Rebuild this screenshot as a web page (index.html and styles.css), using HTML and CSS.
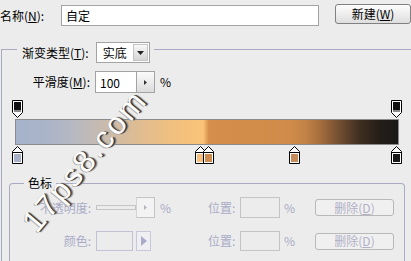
FILE: index.html
```html
<!DOCTYPE html>
<html lang="zh-CN">
<head>
    <meta charset="UTF-8">
    <meta name="viewport" content="width=device-width, initial-scale=1.0">
    <title>渐变编辑器</title>
    <link rel="stylesheet" href="styles.css">
</head>
<body>
    <svg class="defs" width="0" height="0">
        <symbol id="opacity-stop" viewBox="0 0 11 18">
            <path d="M0.5 0.5 H10.5 V12.5 L5.5 17.5 L0.5 12.5 Z" fill="#fff" stroke="#000"/>
            <rect x="2" y="2" width="7" height="8" fill="#111"/>
            <rect x="2" y="10" width="7" height="2" fill="#8a8a8a"/>
        </symbol>
        <symbol id="color-stop" viewBox="0 0 11 18">
            <path d="M5.5 0.5 L10.5 5.5 V17.5 H0.5 V5.5 Z" fill="#fff" stroke="#000"/>
            <path d="M1 6.5 H10" stroke="#000"/>
            <rect x="2" y="8" width="7" height="8" fill="currentColor"/>
        </symbol>
    </svg>

    <div class="dialog">
        <div class="name-row">
            <span class="name-label">名称(<u>N</u>):</span>
            <div class="field name-field">自定</div>
            <button class="btn btn-new">新建(<u>W</u>)</button>
        </div>

        <div class="gradient-group">
            <div class="group-head">
                <span>渐变类型(<u>T</u>):</span>
                <div class="select">
                    <span class="select-value">实底</span>
                    <span class="select-arrow">
                        <svg width="7" height="4" viewBox="0 0 7 4"><path d="M0 0 H7 L3.5 4 Z" fill="#222"/></svg>
                    </span>
                </div>
            </div>

            <div class="smooth-row">
                <span class="row-label">平滑度(<u>M</u>):</span>
                <div class="field num-field">100</div>
                <span class="stepper">
                    <svg width="3" height="5" viewBox="0 0 3 5"><path d="M0 0 L3 2.5 L0 5 Z" fill="#333"/></svg>
                </span>
                <span class="unit">%</span>
            </div>

            <div class="editor">
                <div class="stop-track">
                    <svg class="stop" style="left:0%"><use href="#opacity-stop"/></svg>
                    <svg class="stop" style="left:100%"><use href="#opacity-stop"/></svg>
                </div>
                <div class="gradient-bar"></div>
                <div class="stop-track">
                    <svg class="stop" style="left:0%;color:#a7b0c4"><use href="#color-stop"/></svg>
                    <svg class="stop" style="left:48.4%;color:#f6c07c"><use href="#color-stop"/></svg>
                    <svg class="stop" style="left:50.3%;color:#cd8a4d"><use href="#color-stop"/></svg>
                    <svg class="stop" style="left:73.2%;color:#c58b58"><use href="#color-stop"/></svg>
                    <svg class="stop" style="left:100%;color:#1a1a1a"><use href="#color-stop"/></svg>
                </div>
            </div>

            <div class="stops-group">
                <div class="stops-title">色标</div>
                <div class="stops-row">
                    <span class="row-label">不透明度:</span>
                    <div class="control">
                        <div class="field off-field opacity-field"></div>
                        <span class="stepper off">
                            <svg width="3" height="5" viewBox="0 0 3 5"><path d="M0 0 L3 2.5 L0 5 Z" fill="#b4b4bc"/></svg>
                        </span>
                    </div>
                    <span class="unit">%</span>
                    <span class="pos-label">位置:</span>
                    <div class="field off-field"></div>
                    <span class="unit unit-pos">%</span>
                    <button class="btn btn-off">删除(<u>D</u>)</button>
                </div>
                <div class="stops-row">
                    <span class="row-label">颜色:</span>
                    <div class="control">
                        <div class="swatch"></div>
                        <span class="color-arrow">
                            <svg width="6" height="10" viewBox="0 0 6 10"><path d="M0 0 L6 5 L0 10 Z" fill="#a9abc8"/></svg>
                        </span>
                    </div>
                    <span class="unit"></span>
                    <span class="pos-label">位置:</span>
                    <div class="field off-field"></div>
                    <span class="unit unit-pos">%</span>
                    <button class="btn btn-off">删除(<u>D</u>)</button>
                </div>
            </div>
        </div>

        <div class="watermark">17ps8.com</div>
    </div>
</body>
</html>
```

FILE: styles.css
```css
* {
    margin: 0;
    padding: 0;
    box-sizing: border-box;
}

body {
    background-color: #ececec;
    color: #000;
    font-family: "Noto Sans CJK SC", "Liberation Sans", sans-serif;
    font-size: 12px;
    line-height: 14px;
    overflow: hidden;
}

.defs {
    position: absolute;
}

.dialog {
    position: relative;
    width: 411px;
    height: 261px;
    overflow: hidden;
}

/* name row */

.name-row {
    display: flex;
    align-items: flex-start;
    height: 30px;
}

.name-label {
    width: 61px;
    padding-top: 9px;
}

.field {
    background-color: #fff;
    border: 1px solid #a3a3a3;
    height: 21px;
    padding: 3px 4px 0;
}

.name-field {
    width: 258px;
    margin-top: 5px;
}

.btn {
    font: inherit;
    color: inherit;
    text-align: center;
}

.btn-new {
    width: 76px;
    height: 20px;
    margin: 4px 0 0 16px;
    border: 1px solid #808080;
    border-radius: 3px;
    background: linear-gradient(#fdfdfd, #dedede);
}

/* gradient options */

.gradient-group {
    margin: 19px 0 0 1px;
    border-top: 1px solid #aaabc2;
    border-left: 1px solid #aaabc2;
}

.group-head {
    display: flex;
    align-items: center;
    gap: 7px;
    width: fit-content;
    margin: -8px 0 0 15px;
    padding: 0 4px 0 5px;
    background-color: #ececec;
}

.select {
    display: flex;
    width: 54px;
    height: 21px;
    border: 1px solid #a3a3a3;
    background-color: #fff;
}

.select-value {
    flex: 1;
    padding: 3px 0 0 6px;
}

.select-arrow {
    display: flex;
    align-items: center;
    justify-content: center;
    width: 15px;
    margin: 1px;
    border: 1px solid #c4c4c4;
    background: linear-gradient(#f8f8f8, #d4d4d4);
}

.smooth-row {
    display: flex;
    align-items: center;
    height: 22px;
    margin-top: 8px;
}

.row-label {
    width: 90px;
    padding-right: 2px;
    text-align: right;
}

.num-field {
    width: 42px;
    height: 22px;
    margin-left: 3px;
    padding-top: 4px;
}

.stepper {
    display: flex;
    align-items: center;
    justify-content: center;
    width: 18px;
    height: 22px;
    border: 1px solid #a3a3a3;
    border-left: none;
    background: linear-gradient(#fafafa, #dcdcdc);
}

.unit {
    margin-left: 5px;
}

/* gradient bar and stops */

.editor {
    width: 384px;
    margin: 7px 0 0 13px;
}

.stop-track {
    position: relative;
    height: 18px;
    margin: 0 3px 0 2px;
}

.stop {
    position: absolute;
    top: 0;
    width: 11px;
    height: 18px;
    margin-left: -5px;
}

.gradient-bar {
    height: 26px;
    margin: 1px 0;
    border: 1px solid #8c8c8c;
    background: linear-gradient(to right,
        #a7b3cb 0%, #a9b4c9 7%, #b6b8c2 15%, #c9bbad 23%, #dcbc94 31%,
        #edbf82 39%, #f7c27a 46%, #fac37a 49%, #d58e4b 50.5%, #d08b4a 72%,
        #c08246 76%, #a36b3c 80%, #6e4c30 85%, #3f2e20 90%, #231d18 95.5%, #1a1918 100%);
}

/* stops group */

.stops-group {
    width: 396px;
    margin: 19px 0 0 7px;
    padding-bottom: 40px;
    border: 1px solid #aaabc2;
    border-bottom: none;
    border-radius: 4px 4px 0 0;
}

.stops-title {
    width: fit-content;
    margin: -8px 0 0 14px;
    padding: 0 4px;
    background-color: #ececec;
}

.stops-row {
    display: grid;
    grid-template-columns: 86px 59px 53px 32px 40px 35px 79px;
    align-items: center;
    height: 21px;
    margin-top: 7px;
    color: #a9abc6;
}

.stops-row + .stops-row {
    height: 20px;
    margin-top: 13px;
}

.stops-row .row-label {
    width: auto;
    padding-right: 5px;
}

.stops-row .unit-pos {
    margin-left: 4px;
}

.control {
    display: flex;
    align-items: center;
}

.off-field {
    background-color: #ececec;
    border-color: #c4c4c4;
    height: 100%;
}

.opacity-field {
    width: 40px;
}

.stepper.off {
    width: 19px;
    height: 21px;
    border: 1px solid #c4c4c4;
    border-left: 1px solid #d4d4d4;
    background: #f3f3f3;
}

.swatch {
    width: 37px;
    height: 20px;
    border: 1px solid #c2c2d6;
}

.color-arrow {
    display: flex;
    align-items: center;
    justify-content: center;
    width: 15px;
    height: 20px;
    margin-left: 3px;
    border: 1px solid #c8c8d8;
    background-color: #efeff3;
}

.pos-label {
    white-space: nowrap;
}

.btn-off {
    height: 17px;
    border: 1px solid #b8b8b8;
    border-radius: 3px;
    background-color: #f0f0f0;
    color: #b0b1c6;
    line-height: 14px;
}

/* watermark */

.watermark {
    position: absolute;
    left: -2px;
    top: 143px;
    font-family: "Liberation Sans", sans-serif;
    font-size: 31px;
    line-height: 36px;
    letter-spacing: 2.5px;
    color: #fff;
    transform: rotate(-50deg);
    text-shadow: 1px 1px 0 #333, 2px 2px 1px #777, -1px 0 0 #aaa;
    white-space: nowrap;
}
```
